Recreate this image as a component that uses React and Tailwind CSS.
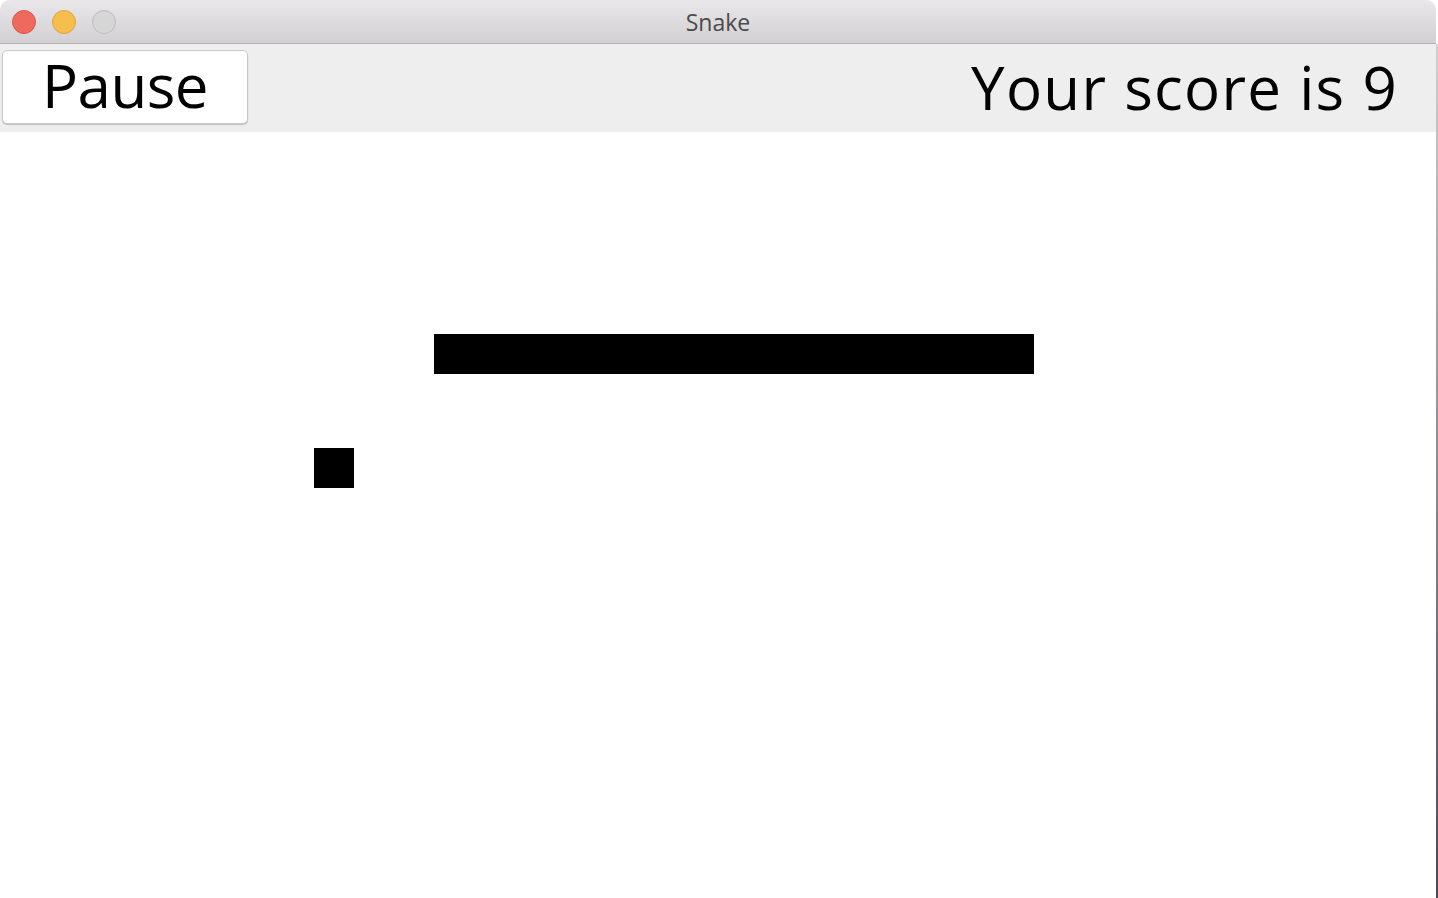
export default function App() {
  return (
    <div className="w-[1438px] h-[898px] bg-white flex overflow-hidden">
      <div className="w-[1436px] h-full flex flex-col bg-white rounded-t-[10px] overflow-hidden">
        <div className="h-[44px] shrink-0 relative flex items-center justify-center bg-gradient-to-b from-[#e9e7e9] to-[#d2d0d2] border-b border-[#b1b1b1]">
          <div className="absolute left-[12px] top-[10px] flex gap-[16px]">
            <div className="w-[24px] h-[24px] rounded-full bg-[#ee6a5f] border border-[#d6574d]" />
            <div className="w-[24px] h-[24px] rounded-full bg-[#f6be4f] border border-[#dca43c]" />
            <div className="w-[24px] h-[24px] rounded-full bg-[#d6d6d6] border border-[#bcbcbc]" />
          </div>
          <span className="text-[23px] text-[#4b4b4b] pt-[1px] font-medium" style={{ fontFamily: '"Open Sans", "Liberation Sans", sans-serif' }}>Snake</span>
        </div>
        <div className="h-[88px] shrink-0 bg-[#eeeeee] flex items-start justify-between pl-[2px] pr-[38px]">
          <button className="mt-[6px] w-[246px] h-[74px] bg-white rounded-[5px] border border-[#c9c9c9] shadow-[0_1px_1px_rgba(0,0,0,0.2)] flex items-center justify-center text-black text-[60px] leading-none tracking-[-0.5px] font-medium" style={{ fontFamily: '"Open Sans", "DejaVu Sans", sans-serif' }}>
            <span className="pb-[4px]">Pause</span>
          </button>
          <span className="mt-[6px] text-[60px] leading-[74px] text-black tracking-[1.3px] font-medium" style={{ fontFamily: '"Open Sans", "DejaVu Sans", sans-serif' }}>Your score is 9</span>
        </div>
        <div className="flex-1 bg-white relative">
          <div className="absolute left-[434px] top-[202px] w-[600px] h-[40px] bg-black" />
          <div className="absolute left-[314px] top-[316px] w-[40px] h-[40px] bg-black" />
        </div>
      </div>
      <div className="w-[2px] h-full flex flex-col">
        <div className="h-[44px] bg-white" />
        <div className="flex-1 bg-gradient-to-b from-[#cfcfcf] to-[#4a4a55]" />
      </div>
    </div>
  );
}
